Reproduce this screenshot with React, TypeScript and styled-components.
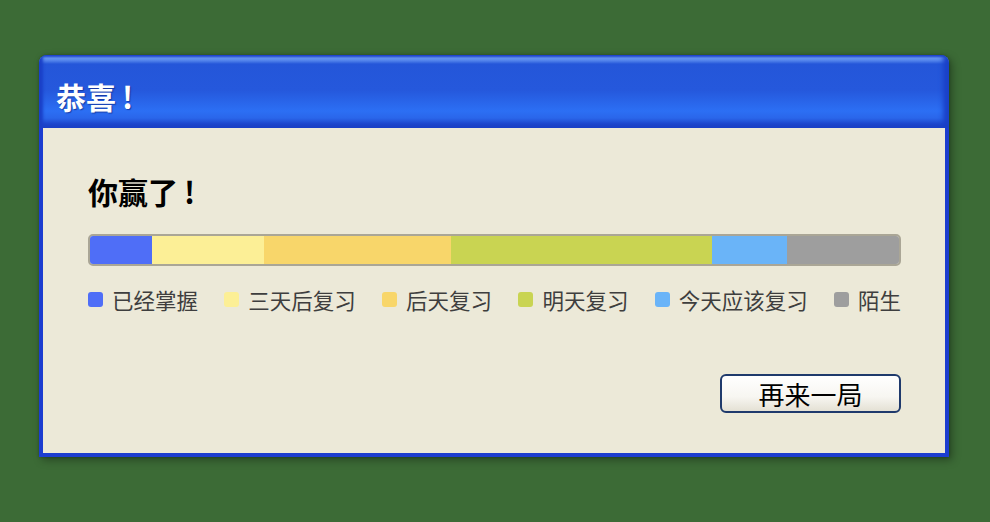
import styled, { createGlobalStyle } from "styled-components";

const GlobalStyle = createGlobalStyle`
  html, body {
    margin: 0;
    padding: 0;
    background: #3c6b36;
  }
  body {
    font-family: "Noto Sans CJK SC", "Noto Sans", sans-serif;
  }
`;

const Page = styled.div`
  min-height: 522px;
  padding: 55px 0 0 39px;
  box-sizing: border-box;
`;

const Window = styled.div`
  width: 910px;
  border-radius: 8px 8px 0 0;
  overflow: hidden;
  box-shadow: 3px 3px 8px rgba(0, 0, 0, 0.35), 0 0 3px rgba(0, 0, 0, 0.25);
`;

const TitleBar = styled.div`
  height: 73px;
  display: flex;
  align-items: center;
  padding: 8px 0 0 17px;
  box-sizing: border-box;
  background: linear-gradient(
    to bottom,
    #1b43cc 0px,
    #6d9cf2 3px,
    #5a8cee 5px,
    #2456d9 9px,
    #2558dc 35px,
    #2c6ff4 56px,
    #2a66ea 63px,
    #1d46cc 69px,
    #1a40c4 73px
  );
  box-shadow: inset 4px 0 3px #1a40c8, inset -6px 0 5px #1a40c8;
`;

const TitleText = styled.h2`
  margin: 0;
  color: #ffffff;
  font-size: 30px;
  font-weight: 700;
  line-height: 36px;
  text-shadow: 1px 1px 1px rgba(10, 30, 120, 0.6);
`;

const Bang = styled.span`
  margin-left: 6px;
`;

const Body = styled.div`
  background: #ece9d8;
  border: 4px solid #1c3dd0;
  border-top: none;
  padding: 45px 44px 40px 45px;
  display: flex;
  flex-direction: column;
`;

const Heading = styled.h1`
  margin: 0;
  font-size: 30px;
  font-weight: 700;
  line-height: 36px;
  color: #000;
`;

const Bar = styled.div`
  margin-top: 25px;
  height: 32px;
  box-sizing: border-box;
  border: 2px solid #aaa696;
  border-radius: 5px;
  overflow: hidden;
  display: flex;
`;

const Segment = styled.div<{ $color: string }>`
  background: ${(p) => p.$color};
  height: 100%;
`;

const Legend = styled.div`
  margin-top: 18px;
  display: flex;
  justify-content: space-between;
  align-items: center;
  height: 30px;
`;

const LegendItem = styled.div`
  display: flex;
  align-items: center;
  gap: 9px;
  font-size: 21.5px;
  color: #3e3e3e;
`;

const Swatch = styled.span<{ $color: string }>`
  width: 15px;
  height: 15px;
  border-radius: 3px;
  background: ${(p) => p.$color};
`;

const Footer = styled.div`
  margin-top: 60px;
  display: flex;
  justify-content: flex-end;
`;

const Button = styled.button`
  width: 181px;
  height: 39px;
  border: 2px solid #1f3a6c;
  border-radius: 6px;
  background: linear-gradient(to bottom, #ffffff 0%, #f7f6f1 60%, #e4e1d4 100%);
  font-family: "Noto Sans CJK SC", "Noto Sans", sans-serif;
  font-size: 26px;
  line-height: 1;
  color: #000;
  padding: 0;
  cursor: pointer;
`;

const segments = [
  { label: "已经掌握", color: "#4f6ef7", width: 62 },
  { label: "三天后复习", color: "#fcef96", width: 112 },
  { label: "后天复习", color: "#f8d66a", width: 187 },
  { label: "明天复习", color: "#c9d452", width: 261 },
  { label: "今天应该复习", color: "#6ab4f8", width: 75 },
  { label: "陌生", color: "#9e9e9e", width: 112 },
];

const total = segments.reduce((s, x) => s + x.width, 0);

export default function App() {
  return (
    <Page>
      <GlobalStyle />
      <Window>
        <TitleBar>
          <TitleText>
            恭喜<Bang>!</Bang>
          </TitleText>
        </TitleBar>
        <Body>
          <Heading>
            你赢了<Bang>!</Bang>
          </Heading>
          <Bar>
            {segments.map((s) => (
              <Segment
                key={s.label}
                $color={s.color}
                style={{ width: `${(s.width / total) * 100}%` }}
              />
            ))}
          </Bar>
          <Legend>
            {segments.map((s) => (
              <LegendItem key={s.label}>
                <Swatch $color={s.color} />
                {s.label}
              </LegendItem>
            ))}
          </Legend>
          <Footer>
            <Button>再来一局</Button>
          </Footer>
        </Body>
      </Window>
    </Page>
  );
}
